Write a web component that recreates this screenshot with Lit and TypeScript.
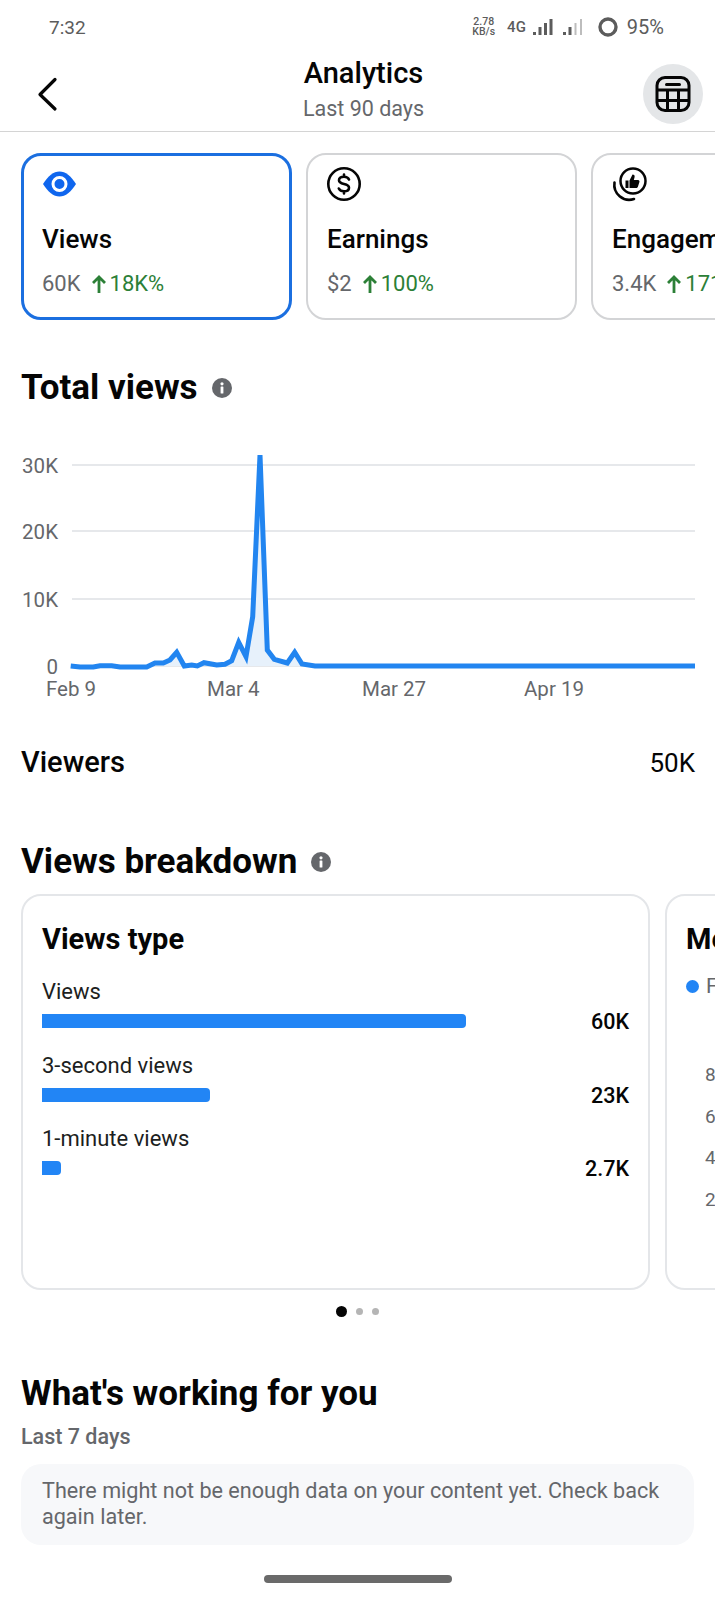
import { LitElement, html, css, svg } from 'lit';
import { customElement } from 'lit/decorators.js';

// chart line, traced at 3x from the chart's top-left corner
const LINE: number[][] = [
  [212, 708], [240, 711], [280, 711], [300, 707], [335, 707], [360, 711], [440, 711], [465, 699],
  [490, 699], [510, 690], [530, 667], [553, 708], [575, 705], [592, 708], [612, 698], [650, 705],
  [675, 703], [695, 692], [716, 637], [738, 680], [758, 560], [780, 75], [802, 660], [823, 688],
  [862, 699], [884, 667], [906, 702], [945, 708], [2085, 708],
].map(([x, y]) => [+(x / 3).toFixed(1), +(y / 3).toFixed(1)]);

const GRID = [
  { label: '30K', y: 35 },
  { label: '20K', y: 101 },
  { label: '10K', y: 169 },
  { label: '0', y: 236 },
];

const DATES = [
  { label: 'Feb 9', x: 46 },
  { label: 'Mar 4', x: 207 },
  { label: 'Mar 27', x: 362 },
  { label: 'Apr 19', x: 524 },
];

const METRICS = [
  { icon: 'eye', name: 'Views', value: '60K', delta: '18K%', active: true },
  { icon: 'dollar', name: 'Earnings', value: '$2', delta: '100%', active: false },
  { icon: 'like', name: 'Engagement', value: '3.4K', delta: '171%', active: false },
];

const BARS = [
  { label: 'Views', value: '60K', width: 424 },
  { label: '3-second views', value: '23K', width: 168 },
  { label: '1-minute views', value: '2.7K', width: 19 },
];

@customElement('app-root')
export class AppRoot extends LitElement {
  static styles = css`
    :host {
      display: block;
      width: 715px;
      height: 1600px;
      overflow: hidden;
      background: #fff;
      font-family: Roboto, 'Liberation Sans', sans-serif;
      color: #050505;
    }
    .status {
      box-sizing: border-box;
      display: flex;
      align-items: center;
      justify-content: space-between;
      height: 56px;
      padding: 0 51px 2px 49px;
      color: #5c5c5c;
    }
    .time {
      font-size: 19px;
    }
    .status-right {
      display: flex;
      align-items: center;
      font-size: 20px;
    }
    .speed {
      font-size: 10.5px;
      line-height: 10px;
      font-weight: 500;
      text-align: center;
    }
    .net {
      margin-left: 12px;
      font-size: 15px;
      font-weight: 500;
    }
    .sig {
      margin-left: 7px;
    }
    .sig.second {
      margin-left: 10px;
    }
    .ring {
      margin: 0 9px 0 15px;
    }
    .header {
      display: grid;
      grid-template-columns: 1fr auto 1fr;
      align-items: center;
      height: 75px;
      padding: 0 12px 0 24px;
      border-bottom: 1px solid #d4d4d4;
    }
    .back {
      display: block;
      width: 36px;
      height: 36px;
    }
    .title {
      padding-bottom: 9px;
      text-align: center;
    }
    .title h1 {
      margin: 0;
      font-size: 29px;
      line-height: 34px;
      font-weight: 500;
    }
    .title p {
      margin: 6px 0 0;
      font-size: 21.5px;
      line-height: 26px;
      color: #65676b;
    }
    .table-btn {
      justify-self: end;
      display: flex;
      align-items: center;
      justify-content: center;
      width: 60px;
      height: 60px;
      border-radius: 50%;
      background: #e4e6e8;
    }
    .metrics {
      display: flex;
      gap: 14px;
      padding: 21px 0 0 21px;
      overflow: hidden;
    }
    .metric {
      flex: none;
      box-sizing: border-box;
      width: 271px;
      height: 167px;
      padding: 13px 19px 0;
      border: 2px solid #d3d4d6;
      border-radius: 20px;
    }
    .metric.active {
      padding: 12px 18px 0;
      border: 3px solid #1b6fe0;
    }
    .metric svg {
      display: block;
      overflow: visible;
    }
    .metric-name {
      margin-top: 23px;
      font-size: 26px;
      line-height: 32px;
      font-weight: 500;
      white-space: nowrap;
    }
    .metric-stat {
      display: flex;
      gap: 10px;
      margin-top: 15px;
      font-size: 22px;
      line-height: 28px;
      color: #65676b;
      white-space: nowrap;
    }
    .delta {
      display: flex;
      align-items: center;
      gap: 3px;
      color: #2c8037;
    }
    h2 {
      display: flex;
      align-items: center;
      gap: 14px;
      margin: 0;
      padding-left: 21px;
      font-size: 35px;
      line-height: 40px;
      font-weight: 700;
    }
    .total {
      margin-top: 48px;
    }
    .chart {
      display: block;
      margin-top: 22px;
    }
    .chart text {
      font-size: 20.5px;
      fill: #65676b;
    }
    .viewers {
      display: flex;
      justify-content: space-between;
      align-items: baseline;
      margin-top: 41px;
      padding: 0 20px 0 21px;
      font-size: 29px;
      line-height: 32px;
      font-weight: 500;
    }
    .viewers span:last-child {
      font-size: 26px;
      font-weight: 400;
    }
    .breakdown {
      margin-top: 63px;
    }
    .panels {
      display: flex;
      gap: 15px;
      padding: 12px 0 0 21px;
      overflow: hidden;
    }
    .panel {
      flex: none;
      box-sizing: border-box;
      width: 629px;
      height: 396px;
      padding: 26px 19px 0;
      border: 2px solid #e4e6e9;
      border-radius: 20px;
    }
    .panel h3 {
      margin: 0 0 22px;
      font-size: 29px;
      line-height: 34px;
      font-weight: 700;
      white-space: nowrap;
    }
    .bar-row {
      display: grid;
      grid-template-columns: 1fr auto;
      column-gap: 12px;
      height: 73.5px;
      align-content: start;
    }
    .bar-label {
      grid-column: 1 / -1;
      font-size: 22px;
      line-height: 28px;
      color: #1c1e21;
    }
    .bar-track {
      align-self: center;
      margin-top: 1px;
    }
    .bar {
      height: 14px;
      background: #2285f5;
      border-radius: 0 4px 4px 0;
    }
    .bar-value {
      font-size: 21.5px;
      line-height: 26px;
      font-weight: 500;
      margin-top: 3px;
    }
    .legend {
      display: flex;
      align-items: center;
      gap: 7px;
      margin-top: -4px;
      font-size: 21px;
      color: #65676b;
    }
    .legend i {
      width: 13px;
      height: 13px;
      border-radius: 50%;
      background: #2285f5;
    }
    .axis {
      margin-top: 56px;
      padding-left: 19px;
      font-size: 19px;
      line-height: 41.5px;
      color: #65676b;
    }
    .dots {
      display: flex;
      justify-content: center;
      align-items: center;
      gap: 9px;
      margin-top: 15px;
      height: 12px;
    }
    .dots i {
      width: 7px;
      height: 7px;
      border-radius: 50%;
      background: #b5b5b5;
    }
    .dots i.on {
      width: 11px;
      height: 11px;
      background: #050505;
    }
    .working {
      margin-top: 57px;
    }
    .sub {
      margin: 10px 0 0 21px;
      font-size: 21.5px;
      line-height: 26px;
      font-weight: 500;
      color: #65676b;
    }
    .notice {
      box-sizing: border-box;
      height: 81px;
      margin: 14px 21px 0;
      padding: 14px 21px;
      border-radius: 20px;
      background: #f7f8fa;
      font-size: 21.6px;
      line-height: 26px;
      color: #65676b;
    }
    .home {
      width: 188px;
      height: 8px;
      margin: 30px auto 0;
      border-radius: 4px;
      background: #6a6a6a;
    }
  `;

  private metricIcon(name: string) {
    if (name === 'eye') {
      return html`<svg width="36" height="32" viewBox="0 0 36 32">
        <path d="M1 16C6 8 11.500 3.500 17.500 3.500S29 8 34 16c-5 8-10.500 12.500-16.500 12.500S6 24 1 16z" fill="#0f66ee" />
        <circle cx="17.500" cy="16" r="6.500" fill="none" stroke="#fff" stroke-width="3" />
      </svg>`;
    }
    if (name === 'dollar') {
      return html`<svg width="36" height="32" viewBox="0 0 36 32">
        <circle cx="17" cy="16" r="15.700" fill="none" stroke="#050505" stroke-width="2.600" />
        <path d="M22 11.500c-.8-1.900-2.700-2.800-5-2.800-2.900 0-5 1.400-5 3.600 0 5 10 2.500 10 7.400 0 2.300-2.200 3.600-5 3.600-2.500 0-4.300-.9-5.200-2.800M17 6.500v2.200M17 23.300v2.200"
          fill="none" stroke="#050505" stroke-width="2.600" stroke-linecap="round" />
      </svg>`;
    }
    return html`<svg width="36" height="32" viewBox="0 0 36 32">
      <circle cx="21" cy="13" r="12.500" fill="none" stroke="#050505" stroke-width="2.500" />
      <path d="M2.500 14.500a15 15 0 0 0 19.500 16.500" fill="none" stroke="#050505" stroke-width="2.600" stroke-linecap="round" />
      <path d="M13.500 12.500h3v7.500h-3zM17.500 20v-7.500l3-6c1.800 0 2.500 1.200 2 3l-.7 2.500h4.200c1.200 0 1.700 1 1.400 2l-1.500 4.700c-.3.900-1 1.300-1.900 1.300z" fill="#050505" />
    </svg>`;
  }

  private arrow() {
    return html`<svg width="16" height="20" viewBox="0 0 16 20">
      <path d="M8 19V3M2 9l6-6 6 6" fill="none" stroke="#2c8037" stroke-width="2.800" />
    </svg>`;
  }

  private info() {
    return html`<svg width="20" height="20" viewBox="0 0 20 20">
      <circle cx="10" cy="10" r="10" fill="#65676b" />
      <rect x="8.600" y="8.500" width="2.800" height="7" rx="0.500" fill="#fff" />
      <circle cx="10" cy="5.800" r="1.600" fill="#fff" />
    </svg>`;
  }

  private chart() {
    const pts = LINE.map((p) => p.join(',')).join(' ');
    const base = 236;
    return html`<svg class="chart" width="715" height="275" viewBox="0 0 715 275">
      ${GRID.map(
        (g) => svg`
          <line x1="72" x2="695" y1=${g.y} y2=${g.y} stroke="#e6e8eb" stroke-width="2" />
          <text x="58" y=${g.y + 8} text-anchor="end">${g.label}</text>`
      )}
      <polygon points="${pts} 695,${base} 71,${base}" fill="#e7f1fb" />
      <polyline points=${pts} fill="none" stroke="#2285f0" stroke-width="5" stroke-linejoin="miter" />
      ${DATES.map((d) => svg`<text x=${d.x} y="266">${d.label}</text>`)}
    </svg>`;
  }

  render() {
    return html`
      <div class="status">
        <span class="time">7:32</span>
        <div class="status-right">
          <div class="speed">2.78<br />KB/s</div>
          <span class="net">4G</span>
          <svg class="sig" width="20" height="20" viewBox="0 0 20 20">
            <rect x="0" y="15" width="3" height="3" fill="#5c5c5c" />
            <rect x="5.500" y="10" width="3" height="8" fill="#5c5c5c" />
            <rect x="11" y="6" width="3" height="12" fill="#5c5c5c" />
            <rect x="16.500" y="2" width="3" height="16" fill="#5c5c5c" />
          </svg>
          <svg class="sig second" width="20" height="20" viewBox="0 0 20 20">
            <rect x="0" y="15" width="3" height="3" fill="#5c5c5c" />
            <rect x="5.500" y="10" width="3" height="8" fill="#5c5c5c" />
            <rect x="11.500" y="6" width="2" height="12" fill="#bdbdbd" />
            <rect x="17" y="2" width="2" height="16" fill="#bdbdbd" />
          </svg>
          <svg class="ring" width="20" height="20" viewBox="0 0 20 20">
            <circle cx="10" cy="10" r="8" fill="none" stroke="#5c5c5c" stroke-width="3.400" />
          </svg>
          <span>95%</span>
        </div>
      </div>

      <div class="header">
        <svg class="back" viewBox="0 0 36 36">
          <path d="M31 3.500 L16 18.500 L31 33" fill="none" stroke="#050505" stroke-width="3.200" stroke-linecap="round" stroke-linejoin="round" />
        </svg>
        <div class="title">
          <h1>Analytics</h1>
          <p>Last 90 days</p>
        </div>
        <div class="table-btn">
          <svg width="36" height="36" viewBox="0 0 36 36">
            <rect x="2" y="1.500" width="32" height="33" rx="8" fill="none" stroke="#050505" stroke-width="3" />
            <path d="M11.500 8.500h13" stroke="#050505" stroke-width="3" stroke-linecap="round" />
            <path d="M2 14h32M2 24.500h32M12.500 14v20M23.500 14v20" stroke="#050505" stroke-width="3" />
          </svg>
        </div>
      </div>

      <div class="metrics">
        ${METRICS.map(
          (m) => html`<div class="metric ${m.active ? 'active' : ''}">
            ${this.metricIcon(m.icon)}
            <div class="metric-name">${m.name}</div>
            <div class="metric-stat">
              <span>${m.value}</span>
              <span class="delta">${this.arrow()}${m.delta}</span>
            </div>
          </div>`
        )}
      </div>

      <h2 class="total">Total views ${this.info()}</h2>
      ${this.chart()}

      <div class="viewers"><span>Viewers</span><span>50K</span></div>

      <h2 class="breakdown">Views breakdown ${this.info()}</h2>
      <div class="panels">
        <div class="panel">
          <h3>Views type</h3>
          ${BARS.map(
            (b) => html`<div class="bar-row">
              <div class="bar-label">${b.label}</div>
              <div class="bar-track"><div class="bar" style="width:${b.width}px"></div></div>
              <div class="bar-value">${b.value}</div>
            </div>`
          )}
        </div>
        <div class="panel">
          <h3>Media type</h3>
          <div class="legend"><i></i>From followers</div>
          <div class="axis">80K<br />60K<br />40K<br />20K</div>
        </div>
      </div>
      <div class="dots"><i class="on"></i><i></i><i></i></div>

      <h2 class="working">What's working for you</h2>
      <div class="sub">Last 7 days</div>
      <div class="notice">There might not be enough data on your content yet. Check back again later.</div>
      <div class="home"></div>
    `;
  }
}
